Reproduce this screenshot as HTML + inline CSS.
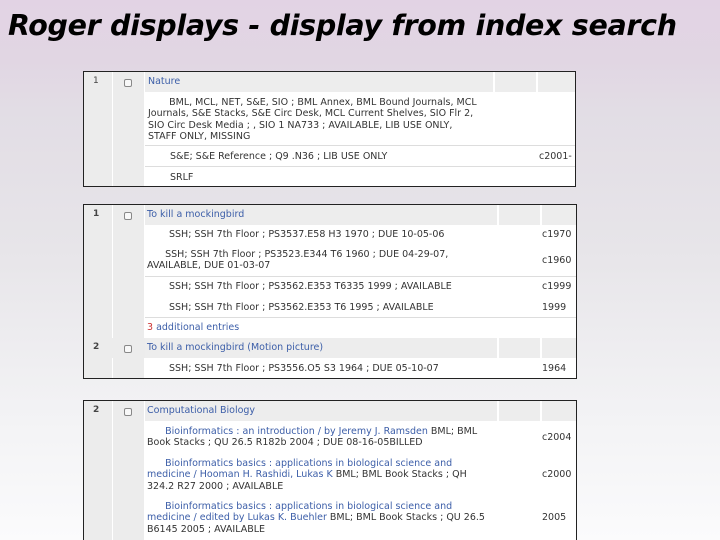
<!DOCTYPE html>
<html style="background:#fbfbfc"><head><meta charset="utf-8"><style>
*{margin:0;padding:0;box-sizing:border-box}
html,body{width:720px;height:540px;overflow:hidden}
body{position:relative;font-family:"DejaVu Sans","Liberation Sans",sans-serif;
background:linear-gradient(#e2d3e4 0px,#e1d6e3 60px,#e2dde5 110px,#e7e5e9 250px,#f3f3f5 420px,#fbfbfc 540px)}
h1{position:absolute;left:8px;top:9px;font:italic bold 28.5px "DejaVu Sans",sans-serif;color:#000;letter-spacing:-0.3px;white-space:nowrap}
.p{position:absolute;background:#fff;border:1px solid #222;overflow:hidden}
.g{position:absolute;left:0;top:0;bottom:0;width:60px;background:#ececec}
.g:after{content:"";position:absolute;left:28px;top:0;bottom:0;border-left:1px solid #fff}
.h{position:absolute;left:61px;right:0;height:20px;background:#ededed}
.vl{position:absolute;top:0;width:0;border-left:2px solid #fff}
.hl{position:absolute;left:61px;right:0;border-top:1px solid #ddd}
.t{position:absolute;font-size:9.5px;line-height:11.4px;color:#333;white-space:nowrap}
.b{color:#3c5ea8}
.n{position:absolute;font-size:9px;color:#444}
.cb{position:absolute;width:8px;height:8px;border:1px solid #888;border-radius:2px;background:#f8f8f8}
.l{position:absolute;font-size:9.5px;color:#3c5ea8;white-space:nowrap}
</style></head><body>
<h1>Roger displays - display from index search</h1>

<div class="p" style="left:83px;top:71px;width:493px;height:116px">
<div class="g"></div>
<div class="h" style="top:0"></div>
<div class="vl" style="left:409px;height:20px"></div><div class="vl" style="left:452px;height:20px"></div>
<div class="n" style="left:9px;top:4px">1</div><div class="cb" style="left:40px;top:7px"></div>
<div class="l" style="left:64px;top:4px">Nature</div>
<div class="t" style="left:64px;top:25px">&nbsp;&nbsp;&nbsp;&nbsp;&nbsp;&nbsp;&nbsp;BML, MCL, NET, S&amp;E, SIO ; BML Annex, BML Bound Journals, MCL<br>Journals, S&amp;E Stacks, S&amp;E Circ Desk, MCL Current Shelves, SIO Flr 2,<br>SIO Circ Desk Media ; , SIO 1 NA733 ; AVAILABLE, LIB USE ONLY,<br>STAFF ONLY, MISSING</div>
<div class="hl" style="top:73px"></div>
<div class="t" style="left:86px;top:79px">S&amp;E; S&amp;E Reference ; Q9 .N36 ; LIB USE ONLY</div>
<div class="t" style="left:455px;top:79px">c2001-</div>
<div class="hl" style="top:94px"></div>
<div class="t" style="left:86px;top:100px">SRLF</div>
</div>

<div class="p" style="left:83px;top:204px;width:494px;height:175px">
<div class="g"></div>
<div class="h" style="top:0"></div>
<div class="vl" style="left:413px;height:20px"></div><div class="vl" style="left:456px;height:20px"></div>
<div class="n" style="left:9px;top:4px;font-weight:bold">1</div><div class="cb" style="left:40px;top:7px"></div>
<div class="l" style="left:63px;top:4px">To kill a mockingbird</div>
<div class="t" style="left:85px;top:24px">SSH; SSH 7th Floor ; PS3537.E58 H3 1970 ; DUE 10-05-06</div>
<div class="t" style="left:458px;top:24px">c1970</div>
<div class="t" style="left:63px;top:44px">&nbsp;&nbsp;&nbsp;&nbsp;&nbsp;&nbsp;SSH; SSH 7th Floor ; PS3523.E344 T6 1960 ; DUE 04-29-07,<br>AVAILABLE, DUE 01-03-07</div>
<div class="t" style="left:458px;top:50px">c1960</div>
<div class="hl" style="top:71px"></div>
<div class="t" style="left:85px;top:76px">SSH; SSH 7th Floor ; PS3562.E353 T6335 1999 ; AVAILABLE</div>
<div class="t" style="left:458px;top:76px">c1999</div>
<div class="t" style="left:85px;top:97px">SSH; SSH 7th Floor ; PS3562.E353 T6 1995 ; AVAILABLE</div>
<div class="t" style="left:458px;top:97px">1999</div>
<div class="hl" style="top:112px"></div>
<div class="t b" style="left:63px;top:117px"><span style="color:#c33">3</span> additional entries</div>
<div class="h" style="top:133px;left:0;background:#ececec"></div>
<div class="h" style="top:133px"></div>
<div class="vl" style="left:413px;top:133px;height:20px"></div><div class="vl" style="left:456px;top:133px;height:20px"></div>
<div class="n" style="left:9px;top:137px;font-weight:bold">2</div><div class="cb" style="left:40px;top:140px"></div>
<div class="l" style="left:63px;top:137px">To kill a mockingbird (Motion picture)</div>
<div class="t" style="left:85px;top:158px">SSH; SSH 7th Floor ; PS3556.O5 S3 1964 ; DUE 05-10-07</div>
<div class="t" style="left:458px;top:158px">1964</div>
</div>

<div class="p" style="left:83px;top:400px;width:494px;height:150px">
<div class="g"></div>
<div class="h" style="top:0"></div>
<div class="vl" style="left:413px;height:20px"></div><div class="vl" style="left:456px;height:20px"></div>
<div class="n" style="left:9px;top:4px;font-weight:bold">2</div><div class="cb" style="left:40px;top:7px"></div>
<div class="l" style="left:63px;top:4px">Computational Biology</div>
<div class="t" style="left:63px;top:25px"><span class="b">&nbsp;&nbsp;&nbsp;&nbsp;&nbsp;&nbsp;Bioinformatics : an introduction / by Jeremy J. Ramsden</span> BML; BML<br>Book Stacks ; QU 26.5 R182b 2004 ; DUE 08-16-05BILLED</div>
<div class="t" style="left:458px;top:31px">c2004</div>
<div class="t" style="left:63px;top:57px"><span class="b">&nbsp;&nbsp;&nbsp;&nbsp;&nbsp;&nbsp;Bioinformatics basics : applications in biological science and<br>medicine / Hooman H. Rashidi, Lukas K</span> BML; BML Book Stacks ; QH<br>324.2 R27 2000 ; AVAILABLE</div>
<div class="t" style="left:458px;top:68px">c2000</div>
<div class="t" style="left:63px;top:100px"><span class="b">&nbsp;&nbsp;&nbsp;&nbsp;&nbsp;&nbsp;Bioinformatics basics : applications in biological science and<br>medicine / edited by Lukas K. Buehler</span> BML; BML Book Stacks ; QU 26.5<br>B6145 2005 ; AVAILABLE</div>
<div class="t" style="left:458px;top:111px">2005</div>
</div>
</body></html>
